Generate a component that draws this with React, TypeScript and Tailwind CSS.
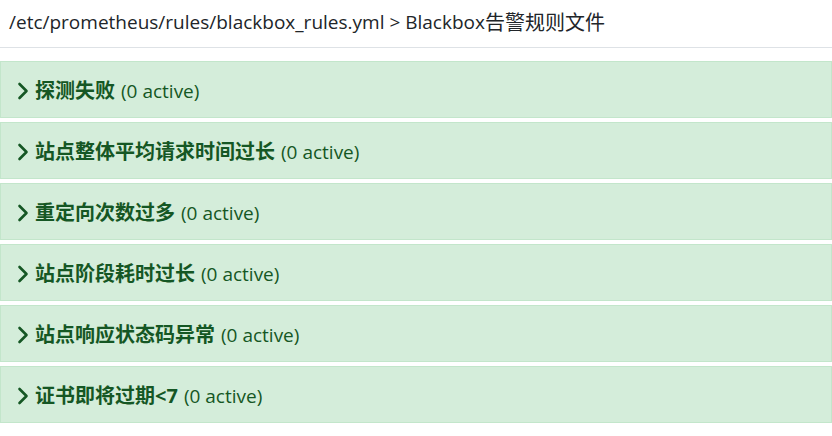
import React from "react";

const rules = [
  "探测失败",
  "站点整体平均请求时间过长",
  "重定向次数过多",
  "站点阶段耗时过长",
  "站点响应状态码异常",
  "证书即将过期<7",
];

function Chevron() {
  return (
    <svg width="12" height="18" viewBox="0 0 12 18" className="shrink-0">
      <polyline points="2.5,2 9.5,9 2.5,16" fill="none" stroke="#155724" strokeWidth="2.6" strokeLinecap="round" strokeLinejoin="round" />
    </svg>
  );
}

export default function App() {
  return (
    <div className="w-[832px] h-[436px] bg-white overflow-hidden" style={{ fontFamily: '"Open Sans", "Noto Sans CJK SC", sans-serif' }}>
      <div className="h-[48px] border-b border-[#dee2e6] flex items-center pl-[9px] text-[19px] text-[#212529] pb-[2px]">
        <span>/etc/prometheus/rules/blackbox_rules.yml &gt; Blackbox</span>
        <span className="text-[20px]">告警规则文件</span>
      </div>
      <div className="pt-[13px] flex flex-col gap-[4px]">
        {rules.map((r) => (
          <div key={r} className="h-[57px] bg-[#d4edda] border border-[#c3e6cb] flex items-center pl-[16px] text-[#155724] pt-[3px]">
            <Chevron />
            <span className="ml-[6px] font-bold text-[20px]">{r}</span>
            <span className="ml-[6px] text-[19px]">(0 active)</span>
          </div>
        ))}
      </div>
    </div>
  );
}
